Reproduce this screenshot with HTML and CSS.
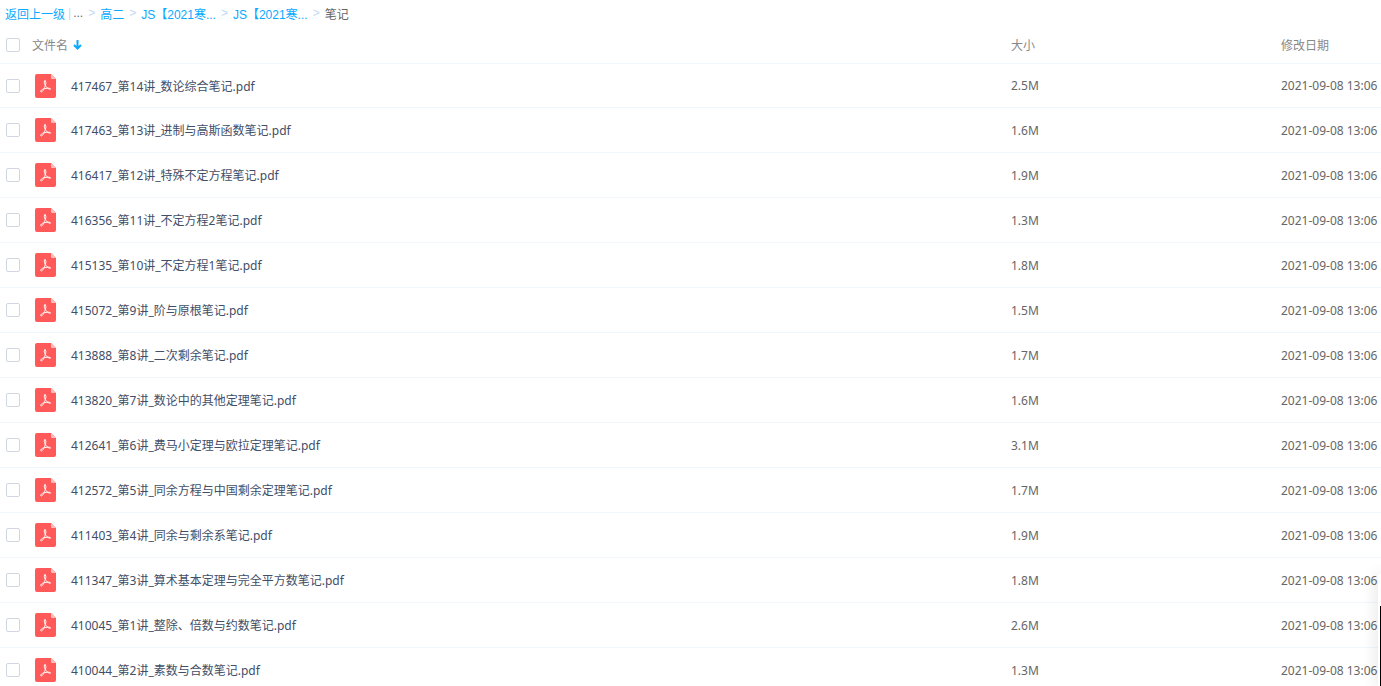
FILE: index.html
```
<!DOCTYPE html>
<html lang="zh-CN">
<head>
    <meta charset="UTF-8">
    <meta name="viewport" content="width=device-width, initial-scale=1.0">
    <title>笔记</title>
    <link rel="stylesheet" href="styles.css">
</head>
<body>
    <svg class="sprite" aria-hidden="true">
        <symbol id="pdf" viewBox="0 0 21 24">
            <path fill="#ff5959" d="M2 0h14l5 5v17a2 2 0 0 1-2 2H2a2 2 0 0 1-2-2V2a2 2 0 0 1 2-2z"/>
            <path fill="#ffbdbd" d="M16 0l5 5h-4a1 1 0 0 1-1-1z"/>
            <path fill="none" stroke="#fff" stroke-width="1" stroke-linecap="round" stroke-linejoin="round" d="M10 6.800c-1.300 0-.9 2.200.3 4.700C9.500 14.200 7.800 18 6.200 18c-1.600-.6.600-2.700 3-3.300 2.200-.6 5.500-.9 6.300.1.400 1-2.500.7-5.200-3.300.9-2.300.8-4.700-.3-4.700z"/>
        </symbol>
    </svg>
    <main class="files">
        <nav class="crumbs">
            <a href="#">返回上一级</a><span class="bar">|</span><span class="dots">...</span>
            <span class="sep">&gt;</span>
            <a href="#">高二</a>
            <span class="sep">&gt;</span>
            <a href="#">JS【2021寒...</a>
            <span class="sep">&gt;</span>
            <a href="#">JS【2021寒...</a>
            <span class="sep">&gt;</span>
            <span>笔记</span>
        </nav>
        <table>
            <thead>
                <tr>
                    <th class="check"><input type="checkbox" aria-label="全选"></th>
                    <th class="name"><button type="button" class="sort">文件名<svg class="arrow" viewBox="0 0 9 10" aria-hidden="true"><path fill="none" stroke="#09aaff" stroke-width="2" d="M4.500 0v9M1 5l3.500 3.500L8 5"/></svg></button></th>
                    <th class="size">大小</th>
                    <th class="date">修改日期</th>
                </tr>
            </thead>
            <tbody>
                <tr>
                    <td><input type="checkbox" id="f1"></td>
                    <td><label class="file" for="f1"><svg class="icon"><use href="#pdf"/></svg>417467_第14讲_数论综合笔记.pdf</label></td>
                    <td class="num">2.5M</td>
                    <td class="num">2021-09-08 13:06</td>
                </tr>
                <tr>
                    <td><input type="checkbox" id="f2"></td>
                    <td><label class="file" for="f2"><svg class="icon"><use href="#pdf"/></svg>417463_第13讲_进制与高斯函数笔记.pdf</label></td>
                    <td class="num">1.6M</td>
                    <td class="num">2021-09-08 13:06</td>
                </tr>
                <tr>
                    <td><input type="checkbox" id="f3"></td>
                    <td><label class="file" for="f3"><svg class="icon"><use href="#pdf"/></svg>416417_第12讲_特殊不定方程笔记.pdf</label></td>
                    <td class="num">1.9M</td>
                    <td class="num">2021-09-08 13:06</td>
                </tr>
                <tr>
                    <td><input type="checkbox" id="f4"></td>
                    <td><label class="file" for="f4"><svg class="icon"><use href="#pdf"/></svg>416356_第11讲_不定方程2笔记.pdf</label></td>
                    <td class="num">1.3M</td>
                    <td class="num">2021-09-08 13:06</td>
                </tr>
                <tr>
                    <td><input type="checkbox" id="f5"></td>
                    <td><label class="file" for="f5"><svg class="icon"><use href="#pdf"/></svg>415135_第10讲_不定方程1笔记.pdf</label></td>
                    <td class="num">1.8M</td>
                    <td class="num">2021-09-08 13:06</td>
                </tr>
                <tr>
                    <td><input type="checkbox" id="f6"></td>
                    <td><label class="file" for="f6"><svg class="icon"><use href="#pdf"/></svg>415072_第9讲_阶与原根笔记.pdf</label></td>
                    <td class="num">1.5M</td>
                    <td class="num">2021-09-08 13:06</td>
                </tr>
                <tr>
                    <td><input type="checkbox" id="f7"></td>
                    <td><label class="file" for="f7"><svg class="icon"><use href="#pdf"/></svg>413888_第8讲_二次剩余笔记.pdf</label></td>
                    <td class="num">1.7M</td>
                    <td class="num">2021-09-08 13:06</td>
                </tr>
                <tr>
                    <td><input type="checkbox" id="f8"></td>
                    <td><label class="file" for="f8"><svg class="icon"><use href="#pdf"/></svg>413820_第7讲_数论中的其他定理笔记.pdf</label></td>
                    <td class="num">1.6M</td>
                    <td class="num">2021-09-08 13:06</td>
                </tr>
                <tr>
                    <td><input type="checkbox" id="f9"></td>
                    <td><label class="file" for="f9"><svg class="icon"><use href="#pdf"/></svg>412641_第6讲_费马小定理与欧拉定理笔记.pdf</label></td>
                    <td class="num">3.1M</td>
                    <td class="num">2021-09-08 13:06</td>
                </tr>
                <tr>
                    <td><input type="checkbox" id="f10"></td>
                    <td><label class="file" for="f10"><svg class="icon"><use href="#pdf"/></svg>412572_第5讲_同余方程与中国剩余定理笔记.pdf</label></td>
                    <td class="num">1.7M</td>
                    <td class="num">2021-09-08 13:06</td>
                </tr>
                <tr>
                    <td><input type="checkbox" id="f11"></td>
                    <td><label class="file" for="f11"><svg class="icon"><use href="#pdf"/></svg>411403_第4讲_同余与剩余系笔记.pdf</label></td>
                    <td class="num">1.9M</td>
                    <td class="num">2021-09-08 13:06</td>
                </tr>
                <tr>
                    <td><input type="checkbox" id="f12"></td>
                    <td><label class="file" for="f12"><svg class="icon"><use href="#pdf"/></svg>411347_第3讲_算术基本定理与完全平方数笔记.pdf</label></td>
                    <td class="num">1.8M</td>
                    <td class="num">2021-09-08 13:06</td>
                </tr>
                <tr>
                    <td><input type="checkbox" id="f13"></td>
                    <td><label class="file" for="f13"><svg class="icon"><use href="#pdf"/></svg>410045_第1讲_整除、倍数与约数笔记.pdf</label></td>
                    <td class="num">2.6M</td>
                    <td class="num">2021-09-08 13:06</td>
                </tr>
                <tr>
                    <td><input type="checkbox" id="f14"></td>
                    <td><label class="file" for="f14"><svg class="icon"><use href="#pdf"/></svg>410044_第2讲_素数与合数笔记.pdf</label></td>
                    <td class="num">1.3M</td>
                    <td class="num">2021-09-08 13:06</td>
                </tr>
            </tbody>
        </table>
    </main>
    <aside class="float"></aside>
</body>
</html>
```

FILE: styles.css
```
* {
    box-sizing: border-box;
}

body {
    margin: 0;
    background-color: #fff;
    color: #424e67;
    font-family: "Noto Sans", "Noto Sans CJK SC", sans-serif;
    font-size: 12px;
}

.sprite {
    display: none;
}

.files {
    height: 100vh;
    overflow-x: hidden;
    overflow-y: auto;
    scrollbar-width: none;
}

.crumbs {
    display: flex;
    align-items: center;
    height: 26px;
    padding-left: 5px;
    color: #666;
    font-family: "Liberation Sans", "Noto Sans CJK SC", sans-serif;
    white-space: nowrap;
}

.crumbs a {
    color: #09aaff;
    text-decoration: none;
}

.bar {
    margin: 0 2px 0 3px;
    color: #c4d8f4;
}

.sep {
    margin: 0 5px;
    color: #c4d8f4;
}

table {
    width: 100%;
    border-collapse: separate;
    border-spacing: 0;
    table-layout: fixed;
}

th,
td {
    height: 45px;
    padding: 0;
    border-bottom: 1px solid #f2f6fd;
    text-align: left;
    white-space: nowrap;
}

th {
    height: 38px;
    color: #888;
    font-weight: normal;
}

tbody tr:first-child td {
    height: 44px;
}

.check {
    width: 32px;
}

.size {
    width: 270px;
}

.date {
    width: 100px;
}

input[type="checkbox"] {
    display: block;
    appearance: none;
    width: 14px;
    height: 14px;
    margin: 0 0 0 6px;
    border: 1px solid #d0d7e2;
    border-radius: 2px;
    background-color: #fff;
}

input[type="checkbox"]:checked {
    background-color: #09aaff;
}

.sort {
    display: flex;
    align-items: center;
    gap: 5px;
    padding: 0;
    border: none;
    background: none;
    color: #888;
    font: inherit;
    cursor: pointer;
}

.arrow {
    width: 9px;
    height: 10px;
}

.file {
    display: flex;
    align-items: center;
    gap: 15px;
    padding-left: 3px;
}

.icon {
    width: 21px;
    height: 24px;
}

.num {
    color: #666;
}

/* edge of the floating panel */
.float {
    position: fixed;
    right: 0;
    bottom: 0;
    width: 3px;
    height: 112px;
    padding: 32px 0 0 2px;
    background-color: #fff;
    box-shadow: 0 0 14px rgba(0, 0, 0, 0.3);
}

.float::before {
    content: "";
    display: block;
    height: 100%;
    background-color: #000;
}
```
